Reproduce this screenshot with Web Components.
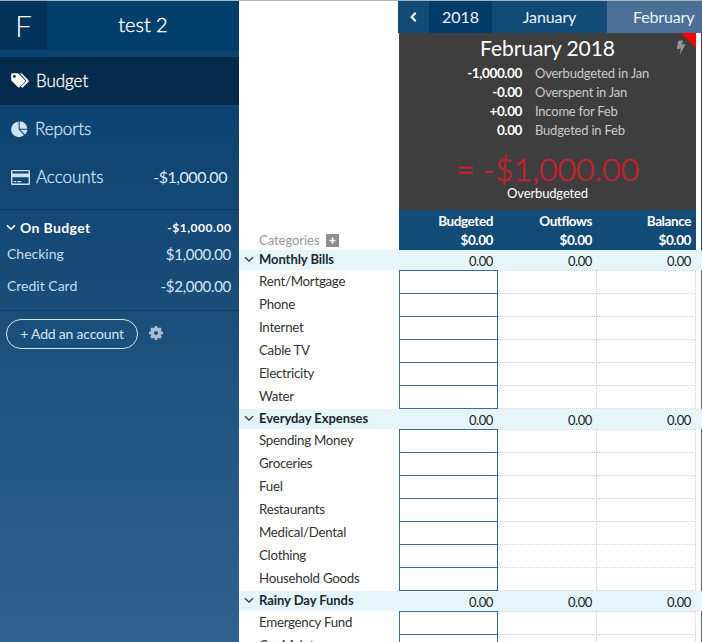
<!DOCTYPE html>
<html lang="en">
<head>
<meta charset="utf-8">
<title>test 2 – Budget</title>
<style>
html,body{margin:0;height:642px;overflow:hidden;background:#fff}
body{font-family:Lato,"Open Sans",sans-serif;font-size:14px;color:#222}
</style>
</head>
<body>
<budget-app></budget-app>
<script>
const define = (name, html, init) => customElements.define(name, class extends HTMLElement {
  connectedCallback() {
    if (this.shadowRoot) return;
    const root = this.attachShadow({ mode: 'open' });
    const t = document.createElement('template');
    t.innerHTML = typeof html === 'function' ? html(this) : html;
    root.append(t.content.cloneNode(true));
    if (init) init(this, root);
  }
});

const icons = {
  tags: ['0 0 19 16', '<path fill="currentColor" fill-rule="evenodd" d="M1.2.3H6.3q.8 0 1.5.6l6 6q1 1 0 2l-5 5q-1 1-2 0l-6-6Q.2 7.200.2 6.400V1.300Q.2.3 1.200.3ZM3.400 2a1.400 1.400 0 1 0 0 2.800 1.400 1.400 0 1 0 0-2.800Z"/><path fill="currentColor" d="M8.300.3h1.500q.8 0 1.500.6l6 6q1 1 0 2l-5 5q-1 1-2.100.100l-.4-.5 5-4.700q.9-.9-.1-1.900L9.900 1.400Q9.200.7 8.300.3Z"/>'],
  pie: ['0 0 18 17', '<path fill="currentColor" d="M7.700.8V8.400L13 13.900A7.600 7.600 0 1 1 7.700.8Z"/><path fill="currentColor" d="M8.700.2A7.600 7.600 0 0 1 16.300 7.700H8.700Z"/><path fill="currentColor" d="M9.400 8.700h7a7.600 7.600 0 0 1-2.300 4.800Z"/>'],
  card: ['0 0 19 15', '<path fill="currentColor" fill-rule="evenodd" d="M1.300 0H17.700Q19 0 19 1.300V13.700Q19 15 17.700 15H1.300Q0 15 0 13.700V1.300Q0 0 1.300 0ZM1.400 1.300V3.500H17.600V1.300ZM1.400 7.200V13.600H17.600V7.200Z"/><path fill="currentColor" d="M2.500 11h2.800v1.300H2.500zM6.200 11h4v1.300h-4z"/>'],
  down: ['0 0 10 7', '<path fill="none" stroke="currentColor" stroke-width="var(--sw,1.3)" d="M1 1.200 5 5.200 9 1.200"/>'],
  left: ['0 0 7 10', '<path fill="none" stroke="currentColor" stroke-width="2" d="M5.700.8 1.700 5l4 4.200"/>'],
  gear: ['0 0 14 14', '<g fill="currentColor"><path fill-rule="evenodd" d="M7 1.600a5.400 5.400 0 1 0 0 10.800A5.400 5.400 0 1 0 7 1.600ZM7 4.900a2.100 2.100 0 1 1 0 4.200 2.100 2.100 0 1 1 0-4.200Z"/>' + [0,45,90,135,180,225,270,315].map(a => `<path transform="rotate(${a} 7 7)" d="M5.300 2.600 5.700 0h2.600l.4 2.600z"/>`).join('') + '</g>'],
  plus: ['0 0 13 13', '<path fill="#8f8f8f" d="M0 0h13v13H0z"/><path stroke="#fff" stroke-width="1.500" d="M3.500 6.500h6M6.500 3.500v6"/>'],
  bolt: ['0 0 10 15', '<path fill="currentColor" d="M2.300.8 7 .3 5.800 4.600 9.600 4 4 14.800 4.800 8.500.8 9.300Z"/>']
};
define('ui-icon', el => {
  const [box, body] = icons[el.getAttribute('name')];
  const [, , w, h] = box.split(' ');
  return `<style>:host{display:block;flex:none;line-height:0}svg{display:block}</style><svg width="${w}" height="${h}" viewBox="${box}">${body}</svg>`;
});

define('side-header', `<style>
:host{display:flex;height:48px;background:#003e6c;border-bottom:1px solid #08365a;color:#fff}
.logo{width:47px;box-sizing:border-box;padding-left:15px;background:#00335b;font-size:30px;line-height:49px;font-weight:300}
.title{flex:1;text-align:center;font-size:20px;line-height:47px;font-weight:300;-webkit-text-stroke:.35px currentColor;letter-spacing:-.05px}
</style><div class="logo">F</div><div class="title"><slot></slot></div>`);

define('nav-item', el => `<style>
:host{display:flex;height:48px;align-items:center;box-sizing:border-box;padding:0 12px 0 11px;color:#cfe2f2;font-size:17px;font-weight:400}
:host([active]){background:#032b4c;color:#fff}
ui-icon{margin-right:6px}
.label{flex:1;line-height:48px;font-weight:300;letter-spacing:-.05px;-webkit-text-stroke:.3px currentColor}
.amount{font-size:16px;line-height:46px;letter-spacing:-.45px;color:#dceaf7}
</style><ui-icon name="${el.getAttribute('icon')}"></ui-icon><span class="label"><slot></slot></span><span class="amount"><slot name="amount"></slot></span>`);

define('account-row', el => `<style>
:host{display:flex;height:32px;align-items:center;padding:0 8px 0 7px;color:#c3dbee;font-size:14px}
:host([head]){height:23px;color:#fff}
ui-icon{margin:0 4px 0 -1px;--sw:1.6}
.label{flex:1;position:relative;top:-1.5px}
.amount{font-size:15px;letter-spacing:-.3px;color:#d3e6f5;position:relative;top:-1px}
:host([head]) .amount{font-size:12px;color:#fff;letter-spacing:.55px;margin-right:-.5px;font-weight:700;top:0}
:host([head]) .label{font-weight:700;font-size:14px;letter-spacing:.35px;top:0}
</style>${el.hasAttribute('head') ? '<ui-icon name="down"></ui-icon>' : ''}<span class="label"><slot></slot></span><span class="amount"><slot name="amount"></slot></span>`);

define('side-bar', `<style>
:host{display:flex;flex-direction:column;width:239px;flex:none;background:linear-gradient(#044170 0,#0b4472 110px,#164b78 260px,#205682 420px,#2f638f 642px);box-sizing:border-box;border-top:1px solid #9eb4c6}
nav{margin-top:7px}
.accounts{box-sizing:border-box;border-top:1px solid #0b3a62;border-bottom:1px solid #0b3a62;height:102px;padding-top:6px;margin-top:8px}
.foot{display:flex;align-items:center;padding:8px 6px;gap:11px;color:#c5d8e8}
.add{box-sizing:border-box;width:132px;height:30px;border:1px solid #d3e1ec;border-radius:15px;text-align:center;line-height:27px;font-size:14px;letter-spacing:-.2px;color:#d3e5f4}
.foot ui-icon{color:#a7bfd3;margin-top:-3px}
</style>
<side-header>test 2</side-header>
<nav>
<nav-item active icon="tags">Budget</nav-item>
<nav-item icon="pie">Reports</nav-item>
<nav-item icon="card">Accounts<span slot="amount">-$1,000.00</span></nav-item>
</nav>
<div class="accounts">
<account-row head>On Budget<span slot="amount">-$1,000.00</span></account-row>
<account-row>Checking<span slot="amount">$1,000.00</span></account-row>
<account-row>Credit Card<span slot="amount">-$2,000.00</span></account-row>
</div>
<div class="foot"><div class="add">+ Add an account</div><ui-icon name="gear"></ui-icon></div>`);

define('month-tabs', `<style>
:host{display:flex;height:32px;margin-left:-1px;background:#114c78;color:#eaf3fa;font-size:16px;line-height:32px;text-align:center}
.prev{width:31px;display:flex;align-items:center;justify-content:center;color:#fff}
.year{width:63px;background:#003c69}
.m{width:115px;letter-spacing:-.1px}
.on{flex:1;background:#4b7199;text-align:left;padding-left:26px;white-space:nowrap;letter-spacing:-.15px}
</style><div class="prev"><ui-icon name="left"></ui-icon></div><div class="year">2018</div><div class="m">January</div><div class="on">February</div>`);

define('month-summary', `<style>
:host{display:block;position:relative;width:297px;height:177px;background:#3e3e3e;color:#fff;overflow:hidden}
h1{margin:0;font-size:21px;font-weight:400;line-height:30px;padding-bottom:1px;text-align:center;letter-spacing:-.05px}
.lines{display:grid;grid-template-columns:123px 1fr;column-gap:13px;grid-auto-rows:19px;line-height:19px;font-size:13px;letter-spacing:-.22px}
.lines b{font-weight:700;text-align:right;font-size:13.5px;letter-spacing:-.4px}
.lines span{color:#c9c9c9}
.total{color:#c9202f;font-weight:300;font-size:32px;line-height:34px;margin-top:12px;text-align:center;-webkit-text-stroke:.6px currentColor;letter-spacing:-.03px}
.note{text-align:center;font-size:13px;line-height:14px;letter-spacing:-.15px}
.corner{position:absolute;right:0;top:0;width:15px;height:15px;background:#f00;clip-path:polygon(0 0,100% 0,100% 100%)}
ui-icon{position:absolute;right:10px;top:7px;color:#959595}
</style><h1>February 2018</h1>
<div class="lines"><b>-1,000.00</b><span>Overbudgeted in Jan</span><b>-0.00</b><span>Overspent in Jan</span><b>+0.00</b><span>Income for Feb</span><b>0.00</b><span>Budgeted in Feb</span></div>
<div class="total">= -$1,000.00</div><div class="note">Overbudgeted</div>
<div class="corner"></div><ui-icon name="bolt"></ui-icon>`);

define('month-totals', `<style>
:host{display:grid;grid-template-columns:repeat(3,99px);width:297px;height:40px;background:#114c78;color:#fff;text-align:right;font-size:13.5px;font-weight:700;line-height:19px;letter-spacing:-.4px}
div{padding:2px 5px 0 0}
</style><div>Budgeted<br>$0.00</div><div>Outflows<br>$0.00</div><div>Balance<br>$0.00</div>`);

define('category-group', el => `<style>
:host{display:block;width:463px}
.head{display:grid;grid-template-columns:20px 140px repeat(3,99px) 6px;height:20px;line-height:20px;background:#e6f5f9;color:#222}
.head ui-icon{margin:6px 0 0 5px;color:#333}
.head b{font-weight:700;font-size:13px;line-height:18px;color:#1c2a30;letter-spacing:-.06px}
.head span{text-align:right;padding-right:5px;font-size:13px;line-height:22px;letter-spacing:-.4px}
.body{padding-bottom:1px}
</style><div class="head"><ui-icon name="down"></ui-icon><b>${el.getAttribute('name')}</b><span>0.00</span><span>0.00</span><span>0.00</span></div><div class="body"><slot></slot></div>`);

define('category-row', `<style>
:host{display:grid;grid-template-columns:160px 99px 99px 99px 5px 1px;height:23px;font-size:13.3px;line-height:22px;color:#333;letter-spacing:-.27px}
.name{padding-left:20px;white-space:nowrap}
.in{box-sizing:border-box;height:24px;border:1px solid #436b8f}
.dot{box-sizing:border-box;height:24px;border:1px dotted #cdd3d7;border-left:0}
.next{height:24px;background:#436b8f}
</style><div class="name"><slot></slot></div><div class="in"></div><div class="dot"></div><div class="dot"></div><i></i><div class="next"></div>`);

define('budget-app', `<style>
:host{display:flex;width:702px;height:642px;overflow:hidden}
main{width:463px;box-sizing:border-box;border-top:1px solid #a9b4bc}
.top{display:grid;grid-template-columns:160px 1fr}
.cats{display:flex;align-items:flex-end;gap:6px;padding:0 0 3px 20px;color:#999;font-size:13px;line-height:14px;letter-spacing:-.04px}
.months{display:grid;grid-template-columns:297px 5px 1px}
month-tabs{grid-column:1/-1}
.d{grid-column:3;background:#3e3e3e}.b{grid-column:3;background:#114c78}
month-summary,month-totals{grid-column:1}
</style>
<side-bar></side-bar>
<main><div class="top"><div class="cats">Categories<ui-icon name="plus"></ui-icon></div>
<div class="months"><month-tabs></month-tabs><month-summary></month-summary><div class="d"></div><month-totals></month-totals><div class="b"></div></div></div>
<div class="list"></div></main>`, (el, root) => {
  const groups = {
    'Monthly Bills': ['Rent/Mortgage', 'Phone', 'Internet', 'Cable TV', 'Electricity', 'Water'],
    'Everyday Expenses': ['Spending Money', 'Groceries', 'Fuel', 'Restaurants', 'Medical/Dental', 'Clothing', 'Household Goods'],
    'Rainy Day Funds': ['Emergency Fund', 'Car Maintenance']
  };
  root.querySelector('.list').innerHTML = Object.entries(groups).map(([g, rows]) =>
    `<category-group name="${g}">${rows.map(r => `<category-row>${r}</category-row>`).join('')}</category-group>`).join('');
});
</script>
</body>
</html>
